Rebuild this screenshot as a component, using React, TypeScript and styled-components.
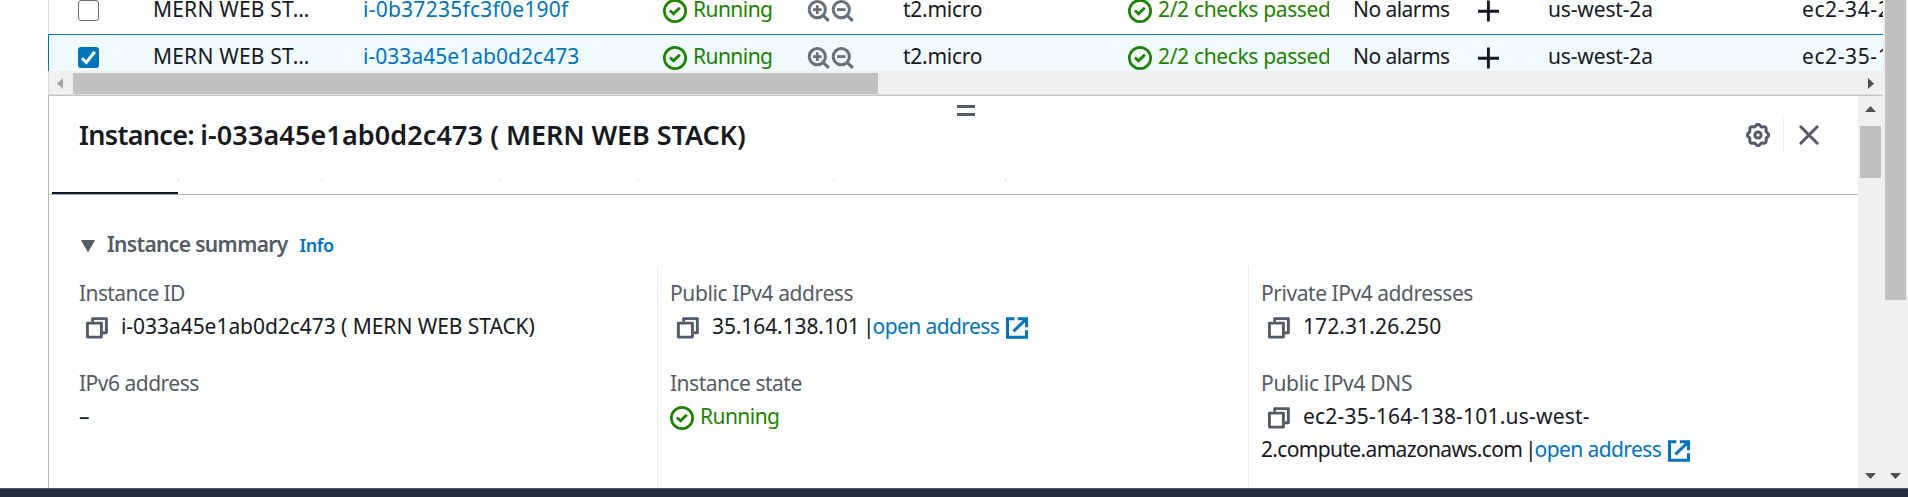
import React from 'react';
import styled, { createGlobalStyle } from 'styled-components';

const color = {
  text: '#16191f',
  label: '#545b64',
  link: '#0073bb',
  success: '#1d8102',
  muted: '#687078',
  border: '#aab7b8',
  divider: '#eaeded',
  track: '#f0f0f0',
  thumb: '#c1c1c1',
  arrow: '#505050',
};

const GlobalStyle = createGlobalStyle`
  *, *::before, *::after { box-sizing: border-box; }
  body {
    margin: 0;
    background: #fff;
    color: ${color.text};
    font-family: "Noto Sans", "Open Sans", sans-serif;
    font-size: 21px;
    line-height: 33px;
    overflow: hidden;
  }
  svg { display: block; flex: none; }
`;

/* ---------- page frame ---------- */

const Page = styled.div`
  display: flex;
  flex-direction: column;
  height: 497px;
  width: 1908px;
`;

const Body = styled.div`
  display: flex;
  flex: none;
  height: 488px;
`;

const Content = styled.main`
  display: flex;
  flex-direction: column;
  width: 1835px;
  margin-left: 48px;
`;

const Footer = styled.footer`
  flex: 1;
  background: #232f3e;
  border-top: 1px solid #4f5864;
`;

/* ---------- scrollbars ---------- */

const VerticalScrollbar = styled.div`
  display: flex;
  flex-direction: column;
  align-items: center;
  flex: none;
  width: 25px;
  background: ${color.track};
`;

const VerticalThumb = styled.div<{ $length: number }>`
  width: 21px;
  height: ${(p) => p.$length}px;
  background: ${color.thumb};
`;

const HorizontalScrollbar = styled.div`
  display: flex;
  flex: none;
  align-items: center;
  height: 25px;
  background: ${color.track};
  border-left: 1px solid #d5dbdb;
  border-bottom: 1px solid #bcc5c5;
  box-shadow: inset 0 -1px #dde1e1;
`;

const HorizontalThumb = styled.div`
  width: 805px;
  height: 21px;
  background: ${color.thumb};
`;

const SideArrowSlot = styled.div<{ $end?: boolean }>`
  display: flex;
  align-items: center;
  flex: none;
  width: 24px;
  padding-left: ${(p) => (p.$end ? 9 : 8)}px;
  margin-left: ${(p) => (p.$end ? 'auto' : 0)};
`;

const TopArrowSlot = styled.div`
  display: flex;
  justify-content: center;
  height: 30px;
  padding-top: 10px;
`;

const BottomArrowSlot = styled.div`
  display: flex;
  justify-content: center;
  margin-top: auto;
  height: 15px;
`;

const Arrow = ({ dir }: { dir: 'up' | 'down' | 'left' | 'right' }) => {
  const vertical = dir === 'up' || dir === 'down';
  const d = {
    up: 'M0 6L5.5 0L11 6Z',
    down: 'M0 0H11L5.5 6Z',
    left: 'M6 0V11L0 5.5Z',
    right: 'M0 0V11L6 5.5Z',
  }[dir];
  return (
    <svg width={vertical ? 11 : 6} height={vertical ? 6 : 11}>
      <path d={d} fill={dir === 'left' ? '#a3a3a3' : color.arrow} />
    </svg>
  );
};

/* ---------- text ---------- */

const Text = styled.span<{ $track?: number }>`
  white-space: pre;
  letter-spacing: ${(p) => p.$track ?? 0}px;
`;

const Link = styled(Text)`
  color: ${color.link};
`;

const SuccessText = styled(Text)`
  color: ${color.success};
`;

const Pipe = styled.span`
  margin: 0 -2px 0 -2px;
`;

/* ---------- icons ---------- */

const StatusIcon = () => (
  <svg width="24" height="24" viewBox="0 0 16 16" fill="none" stroke={color.success}>
    <circle cx="8" cy="8" r="7.1" strokeWidth="1.8" />
    <path d="M4.6 7.7L7 9.8L11.2 5.8" strokeWidth="1.9" />
  </svg>
);

const ZoomIcon = ({ plus }: { plus?: boolean }) => (
  <svg width="24" height="24" fill="none" stroke={color.muted}>
    <circle cx="10.3" cy="10.6" r="8.1" strokeWidth="3" />
    <path d="M16 16.3L21.8 21.8" strokeWidth="3.2" />
    <path d={plus ? 'M6 10.6H14.6M10.3 6.3V14.9' : 'M6 10.6H14.6'} strokeWidth="2.8" />
  </svg>
);

const PlusIcon = () => (
  <svg width="22" height="22" stroke={color.text} strokeWidth="2.9">
    <path d="M0 11.2H21M10.4 0.6V21.6" />
  </svg>
);

const CheckIcon = () => (
  <svg width="21" height="21" fill="none" stroke="#fff" strokeWidth="3">
    <path d="M4 11.2L8.3 15.4L16.8 4.8" />
  </svg>
);

const CopyIcon = () => (
  <svg width="24" height="24" fill="none" stroke={color.label} strokeWidth="2.9">
    <rect x="2.4" y="7.1" width="14" height="14" strokeLinejoin="round" />
    <path d="M7.6 5.7V2.6H21.4V16.7H17.7" strokeLinejoin="round" />
  </svg>
);

const ExternalIcon = () => (
  <svg width="24" height="24" fill="none" stroke={color.link} strokeWidth="3">
    <path d="M9.3 2.8H2.5V21.3H21.5V14.3" />
    <path d="M12.8 2.8H21.5V11.2M20.8 3.5L8.4 15.3" />
  </svg>
);

const gearOutline = Array.from({ length: 96 }, (_, i) => {
  const a = (i / 96) * Math.PI * 2;
  const r = 9.8 + 0.9 * Math.cos(8 * a);
  return `${(12 + r * Math.sin(a)).toFixed(2)} ${(12 - r * Math.cos(a)).toFixed(2)}`;
}).join('L');

const GearIcon = () => (
  <svg width="24" height="24" fill="none" stroke={color.label} strokeWidth="3">
    <path d={`M${gearOutline}Z`} />
    <circle cx="12" cy="12" r="3.1" />
  </svg>
);

const CloseIcon = () => (
  <svg width="22" height="22" stroke={color.label} strokeWidth="3" strokeLinecap="round">
    <path d="M2.8 2.8L19.2 19.2M19.2 2.8L2.8 19.2" />
  </svg>
);

/* ---------- instance table ---------- */

const TableViewport = styled.div`
  flex: none;
  height: 71px;
  overflow: hidden;
`;

const Row = styled.div<{ $selected?: boolean }>`
  display: grid;
  grid-template-columns: 75px 210px 300px 144px 96px 225px 225px 125px 70px 254px 1fr;
  align-items: center;
  height: 47px;
  padding-left: 29px;
  background: ${(p) => (p.$selected ? '#f1faff' : '#fff')};
  border-top: 1px solid ${(p) => (p.$selected ? color.link : '#fff')};
  border-bottom: 1px solid ${(p) => (p.$selected ? color.link : '#fff')};
  border-left: 1px solid ${(p) => (p.$selected ? color.link : '#d5dbdb')};
  &:first-child { margin-top: -13px; }
`;

const Cell = styled.div<{ $clip?: boolean }>`
  display: flex;
  align-items: center;
  min-width: 0;
  width: ${(p) => (p.$clip ? '201px' : 'auto')};
  overflow: hidden;
  ${Text}, ${Link}, ${SuccessText} { padding-bottom: 3px; }
`;

const StatusCell = styled(Cell)`
  gap: 6px;
`;

const Checkbox = styled.span<{ $checked?: boolean }>`
  width: 21px;
  height: 21px;
  border-radius: 3px;
  border: ${(p) => (p.$checked ? '0' : `1.5px solid ${color.muted}`)};
  background: ${(p) => (p.$checked ? color.link : '#fff')};
`;

type Instance = { id: string; idTrack: number; dns: string; selected?: boolean };

const instances: Instance[] = [
  { id: 'i-0b37235fc3f0e190f', idTrack: 0.25, dns: 'ec2-34-2' },
  { id: 'i-033a45e1ab0d2c473', idTrack: 0.04, dns: 'ec2-35-1', selected: true },
];

const InstanceRow = ({ id, idTrack, dns, selected }: Instance) => (
  <Row $selected={selected}>
    <Checkbox $checked={selected}>{selected && <CheckIcon />}</Checkbox>
    <Cell><Text $track={0.2}>MERN WEB ST…</Text></Cell>
    <Cell><Link $track={idTrack}>{id}</Link></Cell>
    <StatusCell><StatusIcon /><SuccessText $track={-0.55}>Running</SuccessText></StatusCell>
    <Cell><ZoomIcon plus /><ZoomIcon /></Cell>
    <Cell><Text $track={-0.25}>t2.micro</Text></Cell>
    <StatusCell $clip><StatusIcon /><SuccessText $track={-0.35}>2/2 checks passed</SuccessText></StatusCell>
    <Cell><Text $track={-0.55}>No alarms</Text></Cell>
    <Cell><PlusIcon /></Cell>
    <Cell><Text $track={-0.15}>us-west-2a</Text></Cell>
    <Cell><Text $track={0.6}>{dns}</Text></Cell>
  </Row>
);

/* ---------- split panel ---------- */

const Panel = styled.section`
  display: flex;
  flex: 1;
  min-height: 0;
  border-left: 1px solid ${color.border};
`;

const PanelMain = styled.div`
  flex: 1;
  min-width: 0;
`;

const PanelHeader = styled.header`
  display: flex;
  flex-direction: column;
  height: 99px;
  border-bottom: 1px solid ${color.border};
`;

const Handle = styled.div`
  flex: none;
  width: 18px;
  height: 11px;
  margin: 9px 0 0 908px;
  border: solid ${color.label};
  border-width: 3px 0;
`;

const TitleRow = styled.div`
  display: flex;
  align-items: center;
  height: 36px;
  margin-top: 1px;
  padding: 0 38px 0 30px;
`;

const Title = styled.h2`
  margin: 0;
  font-size: 27px;
  font-weight: 600;
  line-height: 36px;
  letter-spacing: -0.08px;
  white-space: pre;
`;

const TitleLead = styled.span`
  letter-spacing: -0.7px;
`;

const TitleId = styled.span`
  letter-spacing: 0.1px;
`;

const Actions = styled.div`
  display: flex;
  align-items: center;
  height: 36px;
  margin-left: auto;
`;

const ActionDivider = styled.span`
  width: 1px;
  height: 35px;
  margin: 0 14px 0 13px;
  background: ${color.divider};
`;

const Tabs = styled.nav`
  display: flex;
  height: 14px;
  margin: auto 0 0 3px;
`;

const Tab = styled.div<{ $width: number; $active?: boolean }>`
  display: flex;
  width: ${(p) => p.$width}px;
  justify-content: flex-end;
  background: linear-gradient(${color.text}, ${color.text}) left bottom / ${(p) => (p.$active ? '126px 2px' : '0 0')} no-repeat;
  &::after {
    content: '';
    width: 1px;
    height: 1px;
    background: ${color.border};
  }
`;

const SectionHeader = styled.div`
  display: flex;
  align-items: center;
  height: 71px;
  padding: 28px 0 0 32px;
  > svg { margin-top: 2px; }
`;

const SectionTitle = styled.h3`
  margin: 0 0 0 12px;
  color: ${color.label};
  font-size: 21px;
  font-weight: 600;
  letter-spacing: -0.65px;
`;

const InfoLink = styled.a`
  margin: 2px 0 0 12px;
  color: ${color.link};
  font-size: 18px;
  font-weight: 600;
  letter-spacing: -0.5px;
`;

const Columns = styled.div`
  display: grid;
  grid-template-columns: 608px 591px 1fr;
  height: 222px;
`;

const Column = styled.dl`
  display: flex;
  flex-direction: column;
  gap: 24px;
  margin: 0;
  padding: 11px 0 0 12px;
  border-left: 1px solid ${color.divider};
  &:first-child {
    padding-left: 30px;
    border-left: 0;
  }
`;

const Label = styled.dt<{ $track: number }>`
  color: ${color.label};
  letter-spacing: ${(p) => p.$track}px;
`;

const Value = styled.dd`
  display: flex;
  align-items: center;
  height: 33px;
  margin: 0;
`;

const CopyValue = styled(Value)`
  padding-left: 6px;
  > svg:first-child { margin: 3px 12px 0 0; }
`;

const ExternalSlot = styled.span`
  margin: 3px 0 0 6px;
`;

const RunningValue = styled(Value)`
  gap: 6px;
  > svg { margin-top: 2px; }
`;

const tabWidths = [127, 143, 178, 139, 195, 172];

const Field = ({ label, track, children }: { label: string; track: number; children: React.ReactNode }) => (
  <div>
    <Label $track={track}>{label}</Label>
    {children}
  </div>
);

const OpenAddress = () => (
  <>
    <Pipe>|</Pipe>
    <Link $track={-0.6}>open address</Link>
    <ExternalSlot><ExternalIcon /></ExternalSlot>
  </>
);

export default function App() {
  return (
    <Page>
      <GlobalStyle />
      <Body>
        <Content>
          <TableViewport>
            {instances.map((i) => <InstanceRow key={i.id} {...i} />)}
          </TableViewport>
          <HorizontalScrollbar>
            <SideArrowSlot><Arrow dir="left" /></SideArrowSlot>
            <HorizontalThumb />
            <SideArrowSlot $end><Arrow dir="right" /></SideArrowSlot>
          </HorizontalScrollbar>
          <Panel>
            <PanelMain>
              <PanelHeader>
                <Handle />
                <TitleRow>
                  <Title><TitleLead>Instance: </TitleLead><TitleId>i-033a45e1ab0d2c473 </TitleId>( MERN WEB STACK)</Title>
                  <Actions>
                    <GearIcon />
                    <ActionDivider />
                    <CloseIcon />
                  </Actions>
                </TitleRow>
                <Tabs>
                  {tabWidths.map((w, i) => <Tab key={w} $width={w} $active={i === 0} />)}
                </Tabs>
              </PanelHeader>
              <SectionHeader>
                <svg width="14" height="12"><path d="M0.5 0.5H13.5L7 11.5Z" fill={color.label} stroke={color.label} strokeLinejoin="round" /></svg>
                <SectionTitle>Instance summary</SectionTitle>
                <InfoLink>Info</InfoLink>
              </SectionHeader>
              <Columns>
                <Column>
                  <Field label="Instance ID" track={-0.6}>
                    <CopyValue><CopyIcon /><Text $track={-0.05}>i-033a45e1ab0d2c473 ( MERN WEB STACK)</Text></CopyValue>
                  </Field>
                  <Field label="IPv6 address" track={-0.5}>
                    <Value>–</Value>
                  </Field>
                </Column>
                <Column>
                  <Field label="Public IPv4 address" track={-0.4}>
                    <CopyValue><CopyIcon /><Text $track={-0.1}>35.164.138.101 </Text><OpenAddress /></CopyValue>
                  </Field>
                  <Field label="Instance state" track={-0.5}>
                    <RunningValue><StatusIcon /><SuccessText $track={-0.55}>Running</SuccessText></RunningValue>
                  </Field>
                </Column>
                <Column>
                  <Field label="Private IPv4 addresses" track={-0.45}>
                    <CopyValue><CopyIcon /><Text $track={0.1}>172.31.26.250</Text></CopyValue>
                  </Field>
                  <Field label="Public IPv4 DNS" track={-0.3}>
                    <CopyValue><CopyIcon /><Text $track={0.2}>ec2-35-164-138-101.us-west-</Text></CopyValue>
                    <Value><Text $track={-0.65}>2.compute.amazonaws.com </Text><OpenAddress /></Value>
                  </Field>
                </Column>
              </Columns>
            </PanelMain>
            <VerticalScrollbar>
              <TopArrowSlot><Arrow dir="up" /></TopArrowSlot>
              <VerticalThumb $length={52} />
              <BottomArrowSlot><Arrow dir="down" /></BottomArrowSlot>
            </VerticalScrollbar>
          </Panel>
        </Content>
        <VerticalScrollbar>
          <VerticalThumb $length={300} />
          <BottomArrowSlot><Arrow dir="down" /></BottomArrowSlot>
        </VerticalScrollbar>
      </Body>
      <Footer />
    </Page>
  );
}
